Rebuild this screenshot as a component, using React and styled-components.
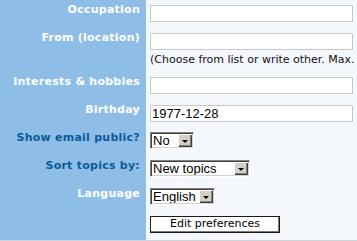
import React from 'react'
import styled, { createGlobalStyle } from 'styled-components';

const GlobalStyle = createGlobalStyle`
    body {
        margin: 0;
        background: #ffffff;
    }
`;

const Form = styled.div`
    display: grid;
    grid-template-columns: 146px 1fr;
    width: 357px;
    overflow: hidden;
    border-bottom: 1px solid #cfd3d8;
    font-family: "DejaVu Sans", Verdana, sans-serif;
`;

const Label = styled.div`
    background: #8ebde8;
    text-align: right;
    padding: 3px 6px 0 0;
    font-size: 11px;
    line-height: 13px;
    font-weight: bold;
    letter-spacing: 0.25px;
    white-space: nowrap;
    color: ${p => p.$accent ? '#0a5b98' : '#ffffff'};
`;

const Field = styled.div`
    background: #f4f7fb;
    padding: ${p => p.$select ? '4px 0 7px 4px' : '5px 0 6px 4px'};
    min-width: 0;
`;

const TextInput = styled.div`
    box-sizing: border-box;
    width: 203px;
    height: 17px;
    background: #ffffff;
    border: 1px solid #c6c8cb;
    padding: 0 1px;
    font-family: "Liberation Sans", Arial, sans-serif;
    font-size: 13px;
    line-height: 15px;
    color: #000;
`;

const Note = styled.div`
    margin-top: 4px;
    font-size: 11px;
    line-height: 12px;
    color: #111;
    white-space: nowrap;
`;

const Select = styled.div`
    box-sizing: border-box;
    display: flex;
    align-items: stretch;
    width: ${p => p.$width}px;
    height: 17px;
    background: #ffffff;
    border-top: 1px solid #808080;
    border-left: 1px solid #808080;
    border-right: 1px solid #ffffff;
    border-bottom: 1px solid #ffffff;
    box-shadow: inset 1px 1px 0 #404040, inset -1px -1px 0 #d4d0c8;
    padding: 1px;
`;

const SelectText = styled.span`
    flex: 1;
    padding-left: 1px;
    font-family: "Liberation Sans", Arial, sans-serif;
    font-size: 13px;
    line-height: 14px;
    color: #000;
    white-space: nowrap;
    overflow: hidden;
`;

const Arrow = styled.span`
    width: 14px;
    background: #d4d0c8;
    box-shadow: inset 1px 1px 0 #ffffff, inset -1px -1px 0 #404040, inset -2px -2px 0 #808080;
    display: flex;
    align-items: center;
    justify-content: center;

    &::after {
        content: "";
        border-left: 3px solid transparent;
        border-right: 3px solid transparent;
        border-top: 3px solid #000;
        margin-top: 1px;
    }
`;

const Button = styled.div`
    box-sizing: border-box;
    width: 130px;
    height: 17px;
    background: #ffffff;
    border: 1px solid #1a1a1a;
    box-shadow: inset -1px -1px 0 #7a7a7a;
    text-align: center;
    font-size: 11px;
    line-height: 14px;
    color: #000;
`;

const Dropdown = ({ value, width }) => (
    <Select $width={width}>
        <SelectText>{value}</SelectText>
        <Arrow />
    </Select>
);

export default class App extends React.Component {

    render() {
        return (
            <>
                <GlobalStyle />
                <Form>
                    <Label>Occupation</Label>
                    <Field><TextInput /></Field>

                    <Label>From (location)</Label>
                    <Field>
                        <TextInput />
                        <Note>(Choose from list or write other. Max.</Note>
                    </Field>

                    <Label>Interests &amp; hobbies</Label>
                    <Field><TextInput /></Field>

                    <Label>Birthday</Label>
                    <Field><TextInput>1977-12-28</TextInput></Field>

                    <Label $accent>Show email public?</Label>
                    <Field $select><Dropdown value="No" width={44} /></Field>

                    <Label $accent>Sort topics by:</Label>
                    <Field $select><Dropdown value="New topics" width={100} /></Field>

                    <Label>Language</Label>
                    <Field $select><Dropdown value="English" width={65} /></Field>

                    <Label />
                    <Field $select><Button>Edit preferences</Button></Field>
                </Form>
            </>
        );
    }

}
